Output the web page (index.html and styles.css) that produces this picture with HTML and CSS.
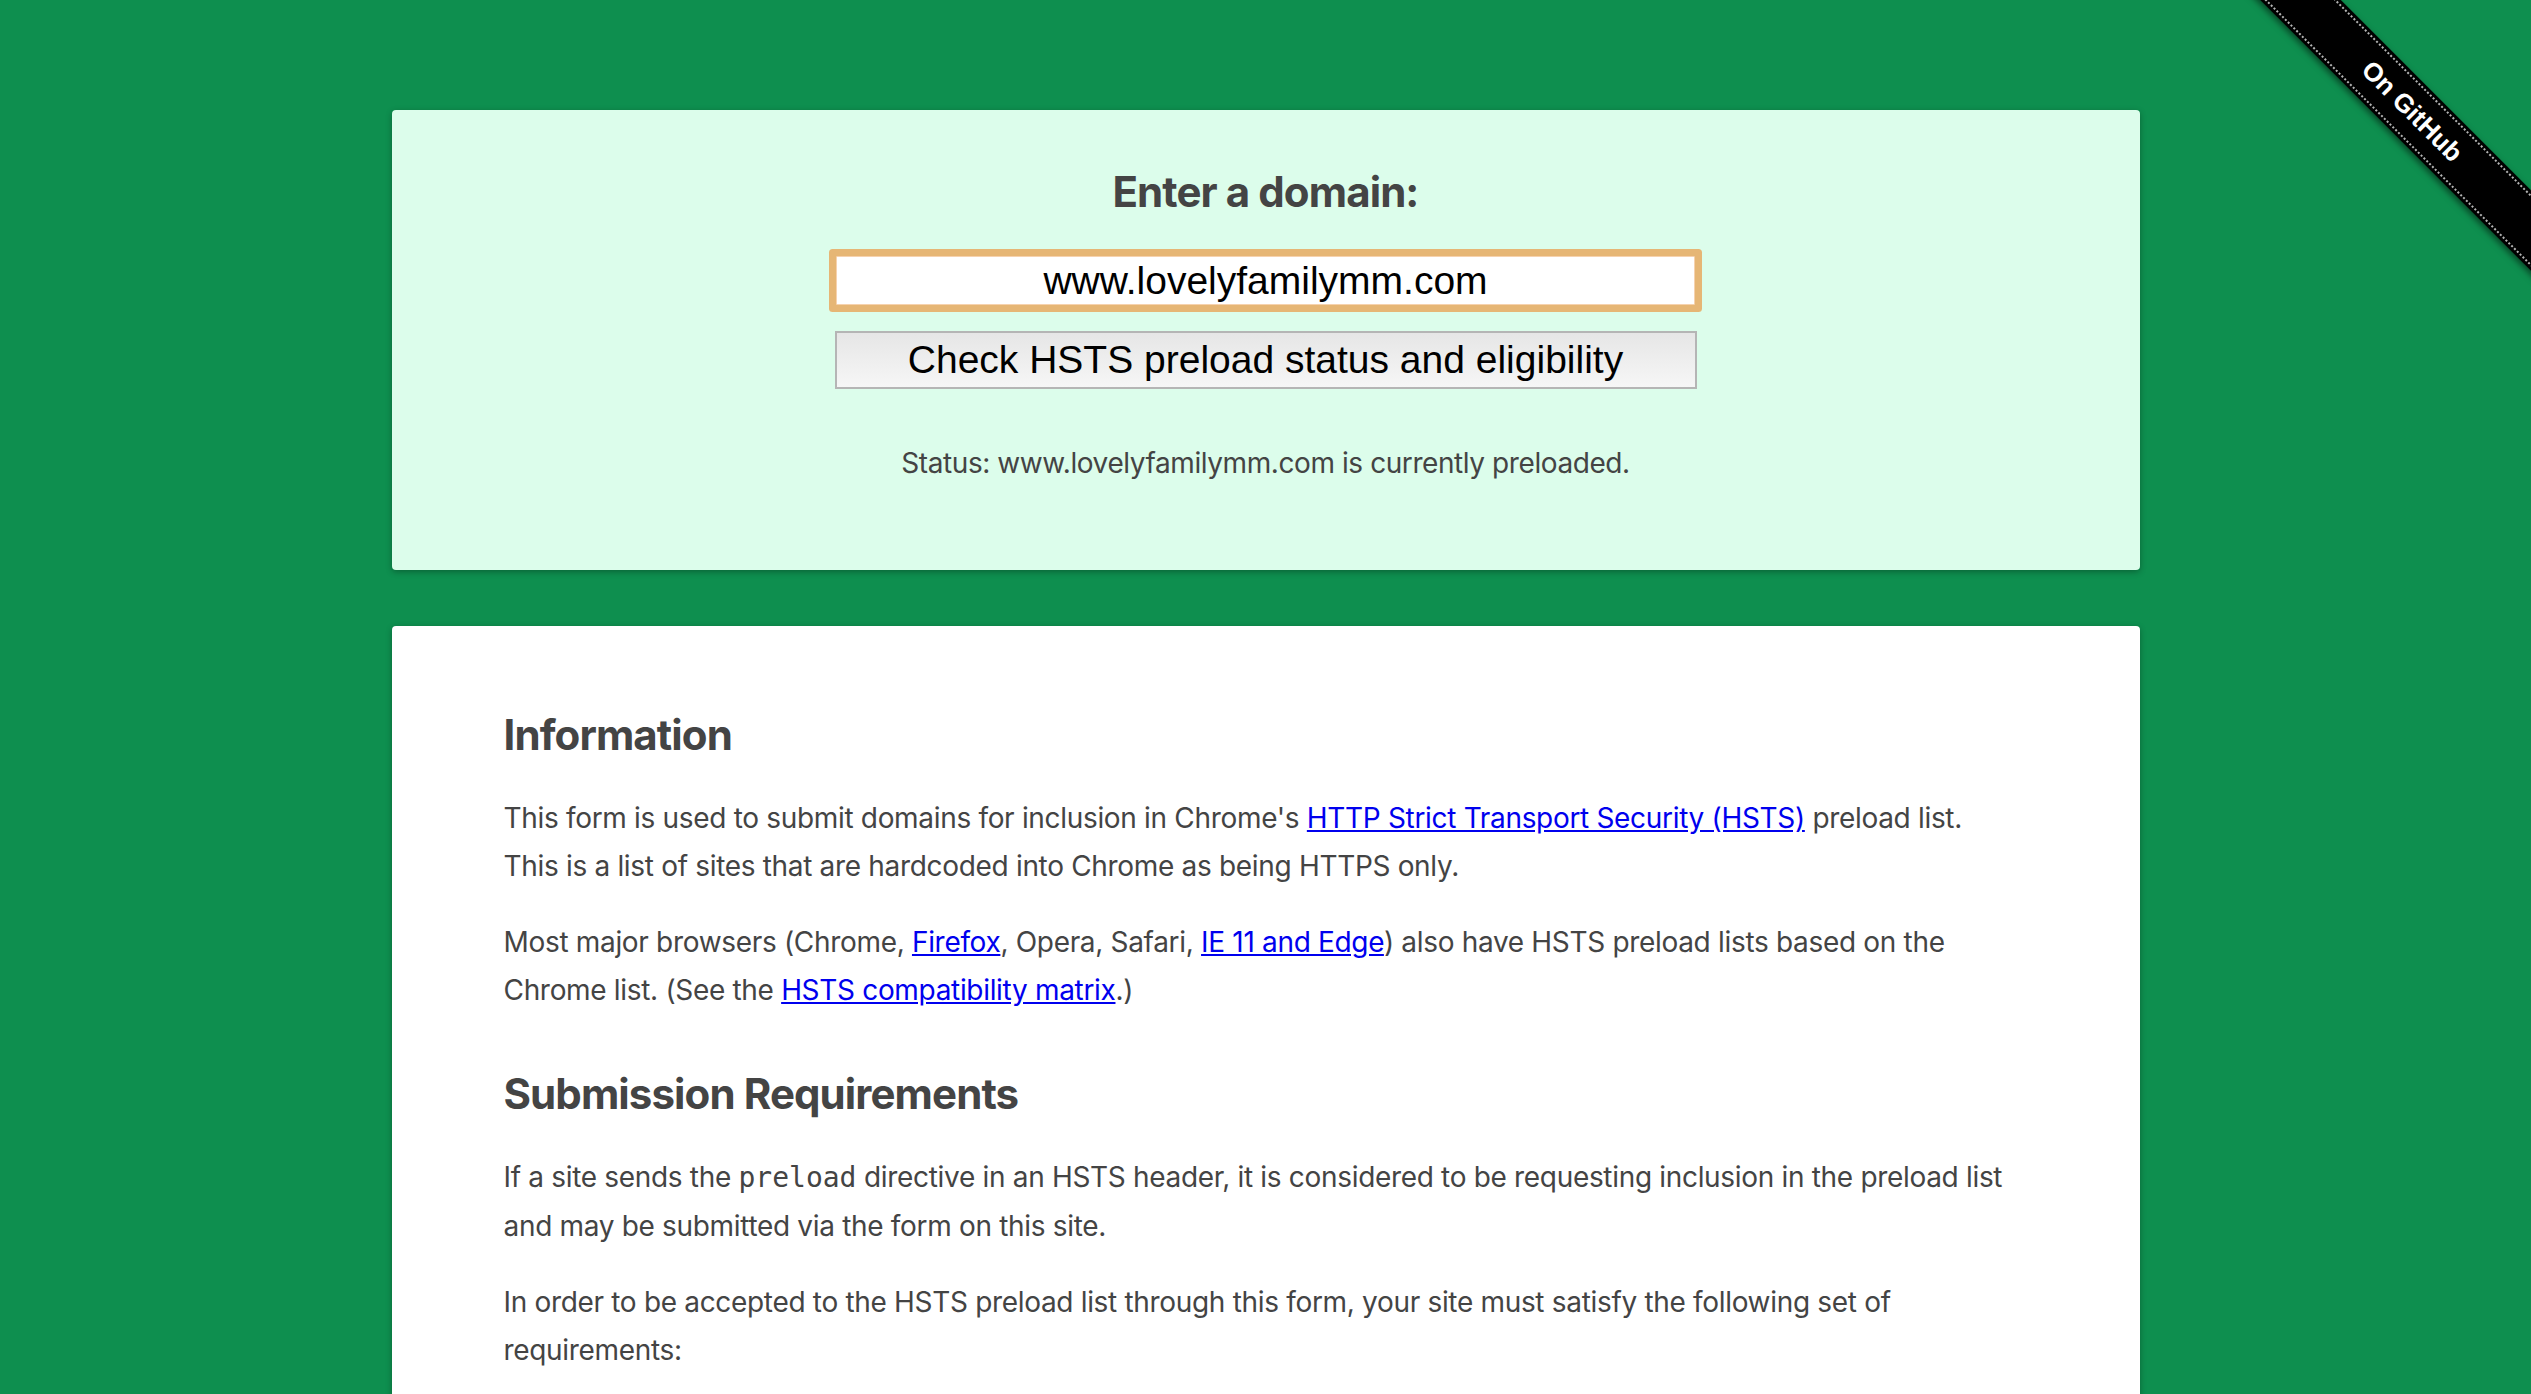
FILE: index.html
```html
<!DOCTYPE html>
<html lang="en">
<head>
  <meta charset="UTF-8" />
  <meta name="viewport" content="width=device-width, initial-scale=1.0"/>
  <title>HSTS Preload List Submission</title>
  <link rel="stylesheet" href="styles.css">
</head>
<body>

  <!-- RIBBON -->
  <div class="ribbon-wrap">
    <a class="ribbon" href="#"><span>On GitHub</span></a>
  </div>

  <div class="page">

    <!-- FORM -->
    <div class="card card-form">
      <h2>Enter a domain:</h2>
      <input type="text" class="domain-input" value="www.lovelyfamilymm.com" />
      <button class="check-btn">Check HSTS preload status and eligibility</button>
      <p class="status">Status: www.lovelyfamilymm.com is currently preloaded.</p>
    </div>

    <!-- INFO -->
    <div class="card card-info">
      <h2>Information</h2>
      <p>This form is used to submit domains for inclusion in Chrome's <a href="#">HTTP Strict Transport Security (HSTS)</a> preload list. This is a list of sites that are hardcoded into Chrome as being HTTPS only.</p>
      <p>Most major browsers (Chrome, <a href="#">Firefox</a>, Opera, Safari, <a href="#">IE 11 and Edge</a>) also have HSTS preload lists based on the Chrome list. (See the <a href="#">HSTS compatibility matrix</a>.)</p>

      <h2>Submission Requirements</h2>
      <p>If a site sends the <code>preload</code> directive in an HSTS header, it is considered to be requesting inclusion in the preload list and may be submitted via the form on this site.</p>
      <p>In order to be accepted to the HSTS preload list through this form, your site must satisfy the following set of requirements:</p>
      <ol>
        <li>Serve a valid <strong>certificate</strong>.</li>
        <li><strong>Redirect</strong> from HTTP to HTTPS on the same host, if you are listening on port 80.</li>
        <li>Serve <strong>all subdomains</strong> over HTTPS.</li>
        <li>Serve an <strong>HSTS header</strong> on the base domain for HTTPS requests.</li>
      </ol>
    </div>

  </div>

</body>
</html>
```

FILE: styles.css
```css
html {
  scrollbar-width: none;
}

::-webkit-scrollbar {
  width: 0;
  height: 0;
}

body {
  margin: 0;
  padding: 0;
  background: #0e8f4f;
  font-family: Inter, "Noto Sans", sans-serif;
  font-size: 28px;
  line-height: 48px;
  letter-spacing: -0.32px;
  color: #444;
}

.page {
  width: 1748px;
  margin: 0 auto;
  padding-top: 110px;
}

.card {
  border-radius: 4px;
  box-shadow: 0 2px 6px rgba(0,0,0,0.3);
}

h2 {
  margin: 0;
  font-size: 42px;
  line-height: 50px;
  font-weight: bold;
  letter-spacing: -0.9px;
  color: #444;
}

/* form card */
.card-form {
  background: #dcfdeb;
  text-align: center;
  padding: 57px 0 83px;
}

.domain-input {
  display: block;
  box-sizing: border-box;
  width: 859px;
  height: 49px;
  margin: 39px auto 0;
  padding: 0 10px;
  border: 1px solid #f6d2ae;
  border-radius: 1px;
  box-shadow: 0 0 0 7px #e6b675;
  outline: none;
  background: #fff;
  font-family: "Liberation Sans", Arial, sans-serif;
  font-size: 39px;
  letter-spacing: 0;
  color: #000;
  text-align: center;
}

.check-btn {
  display: block;
  box-sizing: border-box;
  width: 862px;
  height: 58px;
  margin: 26px auto 0;
  padding: 0;
  border: 2px solid #b5b5b5;
  background: linear-gradient(to bottom, #e6e6e6, #f6f6f6);
  font-family: "Liberation Sans", Arial, sans-serif;
  font-size: 39px;
  letter-spacing: 0;
  color: #000;
}

.status {
  margin: 50px 0 0;
  letter-spacing: -0.42px;
}

/* info card */
.card-info {
  margin-top: 56px;
  background: #fff;
  padding: 84px 122px 60px 112px;
}

.card-info p {
  margin: 34px 0 0;
}

.card-info p + p {
  margin-top: 28px;
}

.card-info p + h2 {
  margin-top: 55px;
}

.card-info a {
  color: #0000ee;
}

code {
  font-family: "DejaVu Sans Mono", monospace;
  font-size: 28px;
  letter-spacing: 0;
}

ol {
  margin: 28px 0 0;
}

/* ribbon */
.ribbon-wrap {
  position: absolute;
  top: 0;
  right: 0;
  width: 300px;
  height: 300px;
  overflow: hidden;
}

.ribbon {
  position: absolute;
  left: -29px;
  top: 83px;
  width: 420px;
  height: 57px;
  background: #000;
  box-shadow: 0 3px 6px rgba(0,0,0,0.5);
  transform: rotate(45deg);
  text-decoration: none;
}

.ribbon span {
  position: absolute;
  left: 0;
  right: 0;
  top: 3px;
  bottom: 3px;
  border-top: 2px dotted rgba(255,255,255,0.7);
  border-bottom: 2px dotted rgba(255,255,255,0.7);
  color: #fff;
  font-family: "Liberation Sans", Arial, sans-serif;
  font-weight: bold;
  font-size: 26px;
  line-height: 47px;
  letter-spacing: 0;
  text-align: center;
}
```
